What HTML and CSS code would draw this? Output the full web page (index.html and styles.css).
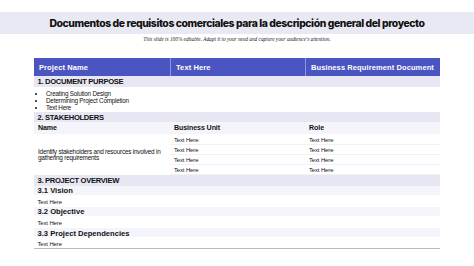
FILE: index.html
```html
<!DOCTYPE html>
<html lang="es">
<head>
<meta charset="utf-8">
<link rel="stylesheet" href="styles.css">
</head>
<body>
<header class="title-band"><h1 class="title">Documentos de requisitos comerciales para la descripción general del proyecto</h1></header>
<p class="subtitle">This slide is 100% editable. Adapt it to your need and capture your audience's attention.</p>
<section class="doc">
  <div class="head">
    <div class="hcell">Project Name</div>
    <div class="hcell">Text Here</div>
    <div class="hcell">Business Requirement Document</div>
  </div>
  <div class="section s1">1. DOCUMENT PURPOSE</div>
  <ul class="bullets">
    <li>Creating Solution Design</li>
    <li>Determining Project Completion</li>
    <li>Text Here</li>
  </ul>
  <div class="section s2">2. STAKEHOLDERS</div>
  <div class="subrow three">
    <div>Name</div><div>Business Unit</div><div>Role</div>
  </div>
  <div class="stake">
    <div class="desc">Identify stakeholders and resources involved in gathering requirements</div>
    <div class="tcell">Text Here</div><div class="tcell">Text Here</div>
    <div class="tcell">Text Here</div><div class="tcell">Text Here</div>
    <div class="tcell">Text Here</div><div class="tcell">Text Here</div>
    <div class="tcell">Text Here</div><div class="tcell">Text Here</div>
  </div>
  <div class="section s3">3. PROJECT OVERVIEW</div>
  <div class="subrow">3.1 Vision</div>
  <div class="textrow">Text Here</div>
  <div class="subrow">3.2 Objective</div>
  <div class="textrow">Text Here</div>
  <div class="subrow">3.3 Project Dependencies</div>
  <div class="textrow last">Text Here</div>
</section>
</body>
</html>
```
FILE: styles.css
```css
html, body {
  margin: 0;
  padding: 0;
  background: #ffffff;
  font-family: "Liberation Sans", Arial, sans-serif;
  color: #111;
}
.title-band {
  margin-top: 12px;
  height: 22px;
  background: #e8e9f3;
  display: flex;
  align-items: center;
  justify-content: center;
}
.title {
  margin: 0;
  font-family: Inter, "Liberation Sans", sans-serif;
  font-weight: 800;
  font-size: 10.4px;
  letter-spacing: -0.42px;
  color: #111;
  white-space: nowrap;
}
.subtitle {
  margin: 0;
  height: 10px;
  line-height: 10px;
  text-align: center;
  font-family: "Liberation Serif", serif;
  font-style: italic;
  font-size: 5.3px;
  color: #222;
}
.doc {
  margin: 14px 34px 0 34px;
  width: 406px;
}
.head {
  display: grid;
  grid-template-columns: 136px 135px 135px;
  height: 18px;
  background: #4a55c2;
}
.hcell {
  display: flex;
  align-items: center;
  padding-left: 5px;
  color: #fff;
  font-weight: 700;
  font-size: 7.5px;
  letter-spacing: 0.1px;
  border-left: 1px solid #8d95dd;
}
.hcell:first-child { border-left: none; }
.section {
  background: #e6e7f3;
  display: flex;
  align-items: center;
  padding-left: 3.5px;
  font-weight: 700;
  font-size: 7.6px;
  letter-spacing: -0.3px;
}
.s1 { height: 11px; }
.s2 { height: 10px; }
.s3 { height: 10.5px; }
.bullets {
  margin: 0;
  height: 25px;
  padding: 3px 0 0 12px;
  box-sizing: border-box;
  font-size: 6.3px;
  line-height: 7px;
  letter-spacing: -0.2px;
}
.subrow {
  background: #f4f5fb;
  height: 10.6px;
  display: flex;
  align-items: center;
  padding-left: 3.5px;
  padding-top: 1px;
  font-weight: 700;
  font-size: 7.6px;
  letter-spacing: 0;
  border-bottom: 1px solid #fff;
  box-sizing: border-box;
}
.subrow.three {
  display: grid;
  grid-template-columns: 136px 135px 135px;
  height: 13px;
  padding-left: 0;
  padding-top: 0;
  font-size: 7.1px;
  letter-spacing: -0.1px;
}
.subrow.three > div { padding-left: 4px; display: flex; align-items: center; }
.stake {
  display: grid;
  grid-template-columns: 136px 135px 135px;
  grid-template-rows: repeat(4, 10px);
}
.desc {
  grid-row: 1 / span 4;
  grid-column: 1;
  display: flex;
  align-items: center;
  padding: 0 4px 0 4px;
  font-size: 6.4px;
  line-height: 6.3px;
  letter-spacing: -0.22px;
}
.tcell {
  display: flex;
  align-items: center;
  padding-left: 4px;
  font-size: 5.9px;
  letter-spacing: -0.1px;
  border-bottom: 1px solid #f1f2f7;
}
.textrow {
  height: 10.6px;
  display: flex;
  align-items: center;
  padding-left: 3.5px;
  padding-top: 1px;
  font-size: 5.9px;
  letter-spacing: -0.1px;
  box-sizing: border-box;
}
.textrow.last { border-bottom: 1px solid #b9bcc8; height: 11px; }
```
